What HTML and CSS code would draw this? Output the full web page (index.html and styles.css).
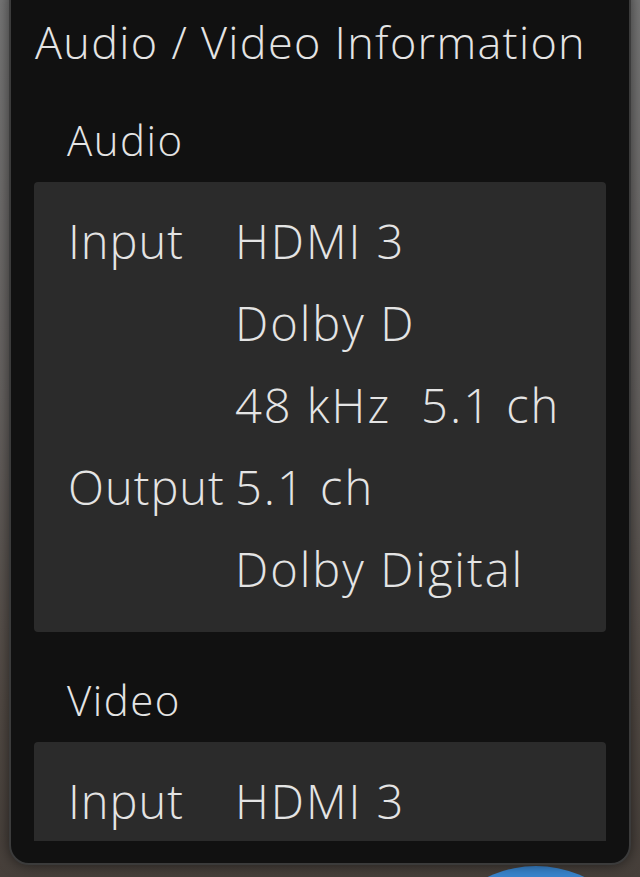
FILE: index.html
```html
<!DOCTYPE html>
<html lang="en">
<head>
<meta charset="utf-8">
<title>Audio / Video Information</title>
<link rel="stylesheet" href="styles.css">
</head>
<body>
<div class="stage">
  <div class="fab"></div>
  <div class="panel">
    <h1 class="title">Audio / Video Information</h1>
    <div class="scroll">
      <section class="group">
        <h2 class="group-title">Audio</h2>
        <div class="card">
          <div class="row"><span class="key">Input</span><span class="val">HDMI 3</span></div>
          <div class="row"><span class="key"></span><span class="val">Dolby D</span></div>
          <div class="row"><span class="key"></span><span class="val">48 kHz<span class="sep"></span>5.1 ch</span></div>
          <div class="row"><span class="key">Output</span><span class="val">5.1 ch</span></div>
          <div class="row"><span class="key"></span><span class="val">Dolby Digital</span></div>
        </div>
      </section>
      <section class="group">
        <h2 class="group-title">Video</h2>
        <div class="card">
          <div class="row"><span class="key">Input</span><span class="val">HDMI 3</span></div>
        </div>
      </section>
    </div>
  </div>
</div>
</body>
</html>
```
FILE: styles.css
```css
html, body {
  margin: 0;
  padding: 0;
  height: 100%;
  overflow: hidden;
}
body {
  background: linear-gradient(180deg, #777777 0%, #666260 45%, #524a44 80%, #463f3a 100%);
  font-family: "Open Sans", "Noto Sans", sans-serif;
  font-weight: 300;
  color: #e4e4e4;
}
.stage {
  position: relative;
  width: 640px;
  height: 877px;
  overflow: hidden;
}
.fab {
  position: absolute;
  left: 424px;
  top: 866px;
  width: 224px;
  height: 224px;
  border-radius: 50%;
  background: #3a86cf;
}
.panel {
  position: relative;
  box-sizing: border-box;
  width: 622px;
  height: 885px;
  margin: 0 0 0 9px;
  top: -20px;
  padding: 30px 23px 0 23px;
  background: #111111;
  border: 2px solid #3b3b3b;
  border-radius: 20px;
  box-shadow: 0 0 14px rgba(0, 0, 0, 0.55);
}
.title {
  margin: 0;
  padding-left: 1px;
  font-size: 45px;
  line-height: 60px;
  font-weight: 300;
  letter-spacing: 1.3px;
  white-space: nowrap;
}
.scroll {
  height: 769px;
  overflow: hidden;
}
.group {
  margin-top: 40px;
}
.group-title {
  margin: 0 0 14px 0;
  padding-left: 33px;
  font-size: 42px;
  line-height: 56px;
  font-weight: 300;
  letter-spacing: 1.5px;
}
.card {
  background: #2b2b2b;
  border-radius: 4px;
  padding: 18px 0 22px 34px;
}
.row {
  display: flex;
  font-size: 47px;
  line-height: 82px;
  letter-spacing: 2px;
  white-space: nowrap;
}
.key {
  width: 167px;
  flex: none;
  letter-spacing: 1px;
}
.sep {
  display: inline-block;
  width: 30px;
}
```
